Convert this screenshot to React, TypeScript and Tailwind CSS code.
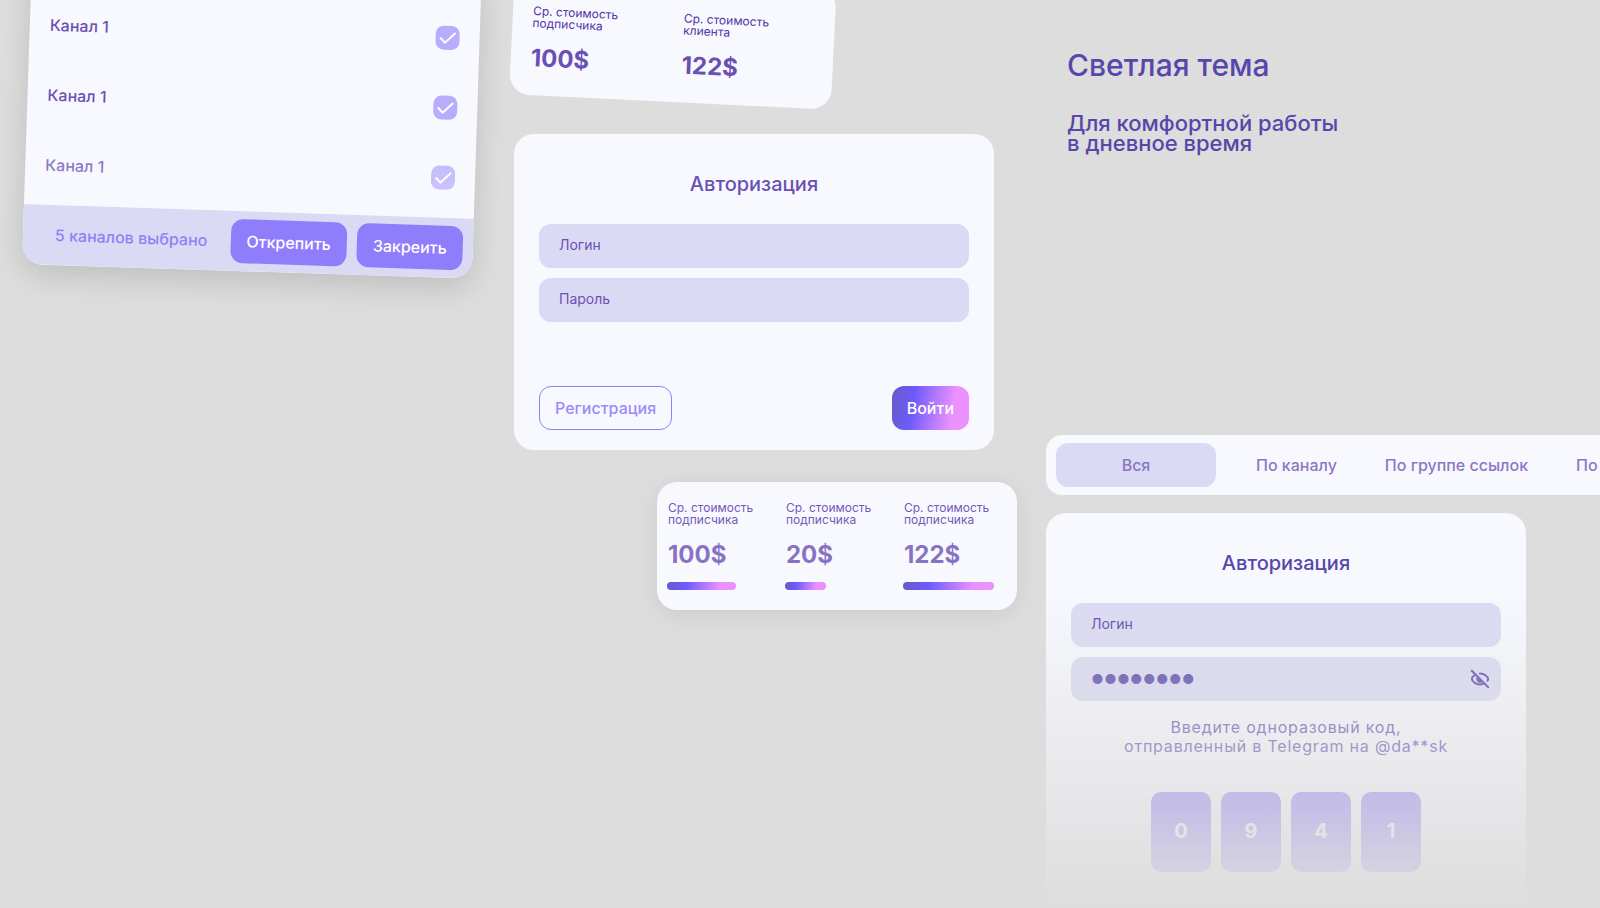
import { useState } from "react";

const channels = [
  { id: "channel-a", name: "Канал 1" },
  { id: "channel-b", name: "Канал 1" },
  { id: "channel-c", name: "Канал 1" },
];

const stats = [
  { label: ["Ср. стоимость", "подписчика"], value: "100$", bar: 69 },
  { label: ["Ср. стоимость", "подписчика"], value: "20$", bar: 41 },
  { label: ["Ср. стоимость", "подписчика"], value: "122$", bar: 91 },
];

const tabs = ["Вся", "По каналу", "По группе ссылок", "По"];

export default function App() {
  return (
    <main className="grid h-screen grid-cols-[509fr_537fr_554fr] items-start overflow-hidden bg-[#dddddd] font-['Inter',sans-serif]">
      <section className="pl-[22px]">
        <ChannelPicker />
      </section>

      <section className="flex flex-col">
        <TiltedStats />
        <LoginCard />
        <StatsCard />
      </section>

      <section className="min-w-0 pt-[49px]">
        <div className="pl-[21px] font-medium text-[#5746ab]">
          <h1 className="text-3xl leading-8">Светлая тема</h1>
          <p className="mt-8 text-[22px] leading-5">
            Для комфортной работы
            <br />в дневное время
          </p>
        </div>
        <Tabs />
        <CodeCard />
      </section>
    </main>
  );
}

function ChannelPicker() {
  const [selected, setSelected] = useState(channels.map((c) => c.id));

  const toggle = (id: string) =>
    setSelected((prev) => (prev.includes(id) ? prev.filter((x) => x !== id) : [...prev, id]));

  return (
    <div className="-mt-[46px] max-w-[450px] origin-bottom-left rotate-[1.87deg] overflow-hidden rounded-[20px] bg-[#f8f9ff] shadow-[0_10px_30px_rgba(0,0,0,0.14)]">
      <div className="relative pt-[35px] pb-[5px]">
        <ul>
          {channels.map((c) => (
            <li key={c.id}>
              <label className="flex h-[70px] items-center justify-between px-5 font-medium text-[#6b50b4]">
                {c.name}
                <span className="grid">
                  <input
                    type="checkbox"
                    checked={selected.includes(c.id)}
                    onChange={() => toggle(c.id)}
                    className="peer col-start-1 row-start-1 size-6 appearance-none rounded-lg bg-[#dbdaf4] checked:bg-[#b8adfd]"
                  />
                  <svg
                    viewBox="0 0 24 24"
                    className="pointer-events-none col-start-1 row-start-1 hidden size-6 fill-none stroke-white stroke-2 peer-checked:block"
                  >
                    <path d="M4.500 12l5 5L19.800 7" />
                  </svg>
                </span>
              </label>
            </li>
          ))}
        </ul>
        <div className="pointer-events-none absolute inset-x-0 bottom-0 h-[100px] bg-linear-to-b from-[#f8f9ff]/0 to-[#f8f9ff]/40" />
      </div>
      <div className="flex h-[60px] items-center gap-2.5 bg-[#dbdaf4] pr-2.5 pl-8">
        <p className="mr-auto font-medium text-[#9180f8]">5 каналов выбрано</p>
        <button type="button" className="h-11 rounded-xl bg-[#907dfc] px-4 font-medium text-white">
          Открепить
        </button>
        <button type="button" className="h-11 rounded-xl bg-[#907dfc] px-4 font-medium text-white">
          Закреить
        </button>
      </div>
    </div>
  );
}

function TiltedStats() {
  return (
    <div className="-mt-7 grid max-w-[322px] origin-bottom-left rotate-[2.8deg] grid-cols-[151px_auto] rounded-[20px] bg-[#f8f9ff] px-5 pt-8 pb-[21px]">
      <div>
        <p className="text-xs leading-3 text-[#5233a8]">
          Ср. стоимость
          <br />
          подписчика
        </p>
        <p className="mt-[13px] text-2xl leading-8 font-bold text-[#6b50b4]">100$</p>
      </div>
      <div>
        <p className="text-xs leading-3 text-[#5233a8]">
          Ср. стоимость
          <br />
          клиента
        </p>
        <p className="mt-[13px] text-2xl leading-8 font-bold text-[#6b50b4]">122$</p>
      </div>
    </div>
  );
}

function LoginCard() {
  return (
    <form
      onSubmit={(e) => e.preventDefault()}
      className="mt-10 ml-[5px] max-w-[480px] rounded-[20px] bg-[#f8f9ff] px-[25px] pt-9 pb-5 text-[#6b50b4]"
    >
      <h2 className="text-center text-xl leading-7 font-medium">Авторизация</h2>
      <div className="mt-[26px] space-y-2.5">
        <Field label="Логин" />
        <Field label="Пароль" type="password" />
      </div>
      <div className="mt-16 flex justify-between">
        <button
          type="button"
          className="h-11 rounded-xl border border-[#907dfc] px-[15px] font-medium text-[#9b8bfa]"
        >
          Регистрация
        </button>
        <button
          type="submit"
          className="h-11 rounded-xl bg-[linear-gradient(100deg,#6a5acd_4%,#6c5bfb_28%,#ea90ff_76%)] px-[15px] font-medium text-white"
        >
          Войти
        </button>
      </div>
    </form>
  );
}

function Field({ label, type = "text" }: { label: string; type?: string }) {
  return (
    <input
      type={type}
      aria-label={label}
      placeholder={label}
      className="block h-11 w-full rounded-xl bg-[#dbdaf4] px-5 pb-[3px] text-sm outline-none placeholder:text-current"
    />
  );
}

function StatsCard() {
  return (
    <div className="mt-8 mr-[29px] grid w-[360px] grid-cols-[repeat(3,118px)] self-end rounded-[20px] bg-[#f8f9ff] py-5 pl-2.5 shadow-[0_4px_24px_rgba(0,0,0,0.08)]">
      {stats.map((s) => (
        <div key={s.value}>
          <p className="pl-px text-xs leading-3 text-[#7359b9]">
            {s.label[0]}
            <br />
            {s.label[1]}
          </p>
          <p className="mt-[13px] pl-px text-2xl leading-8 font-bold text-[#8873c2]">{s.value}</p>
          <div
            className="mt-[11px] h-2 rounded-full bg-[linear-gradient(100deg,#6a5acd_4%,#6c5bfb_28%,#ea90ff_76%)]"
            style={{ width: s.bar }}
          />
        </div>
      ))}
    </div>
  );
}

function Tabs() {
  const [active, setActive] = useState("Вся");

  return (
    <nav className="mt-[282px] flex h-[60px] items-center overflow-hidden rounded-l-2xl bg-[#f8f9ff] pl-2.5">
      {tabs.map((tab) => (
        <button
          key={tab}
          type="button"
          onClick={() => setActive(tab)}
          className={
            "h-11 shrink-0 rounded-xl font-medium text-[#8b77c5] " +
            (tab === "Вся" ? "mr-4 w-40 " : "px-6 ") +
            (tab === active ? "bg-[#dbdaf4]" : "")
          }
        >
          {tab}
        </button>
      ))}
    </nav>
  );
}

function CodeCard() {
  return (
    <form
      onSubmit={(e) => e.preventDefault()}
      className="relative mt-[18px] max-w-[480px] overflow-hidden rounded-[20px] bg-[#f8f9ff] px-[25px] pt-9 pb-16 text-[#5746ab]"
    >
      <h2 className="text-center text-xl leading-7 font-medium">Авторизация</h2>
      <div className="mt-[26px] space-y-2.5">
        <Field label="Логин" />
        <div className="flex h-11 items-center rounded-xl bg-[#dbdaf4] pr-[11px] pl-5">
          <input
            type="password"
            aria-label="Пароль"
            defaultValue="12345678"
            className="h-11 w-full font-['Liberation_Sans',sans-serif] text-[37px] outline-none"
          />
          <button type="button" aria-label="Показать пароль">
            <EyeOff />
          </button>
        </div>
      </div>
      <p className="mt-[17px] text-center leading-[19px] tracking-wider text-[#6450b4]">
        Введите одноразовый код,
        <br />
        отправленный в Telegram на @da**sk
      </p>
      <div className="mt-9 flex justify-center gap-2.5">
        {["0", "9", "4", "1"].map((digit, i) => (
          <input
            key={i}
            type="text"
            inputMode="numeric"
            maxLength={1}
            aria-label={`Цифра ${i + 1}`}
            defaultValue={digit}
            className="h-20 w-[60px] rounded-[10px] bg-[#907dfc] pb-[3px] text-center text-xl font-bold text-[#f8f9ff] outline-none"
          />
        ))}
      </div>
      {/* fades the card into the page */}
      <div className="pointer-events-none absolute inset-x-0 top-[70px] bottom-0 bg-linear-to-b from-[#dddddd]/0 to-[#dddddd] to-[325px]" />
    </form>
  );
}

function EyeOff() {
  return (
    <svg viewBox="0 0 20 20" fill="none" stroke="currentColor" strokeWidth="2" strokeLinecap="round" className="size-5">
      <path d="M1.800 1.800l16.400 16.400" />
      <path d="M4.500 6.300C2.900 7.400 1.900 8.900 1.900 10c0 2 3.500 5.500 8.100 5.500 1.400 0 2.600-.3 3.700-.8" />
      <path d="M9.800 4.600c4.700-.1 8.300 3.300 8.300 5.400 0 .6-.2 1.200-.6 1.700" />
      <path d="M7.400 7.600a3.500 3.500 0 0 0 5.200 5z" fill="currentColor" stroke="none" />
    </svg>
  );
}
